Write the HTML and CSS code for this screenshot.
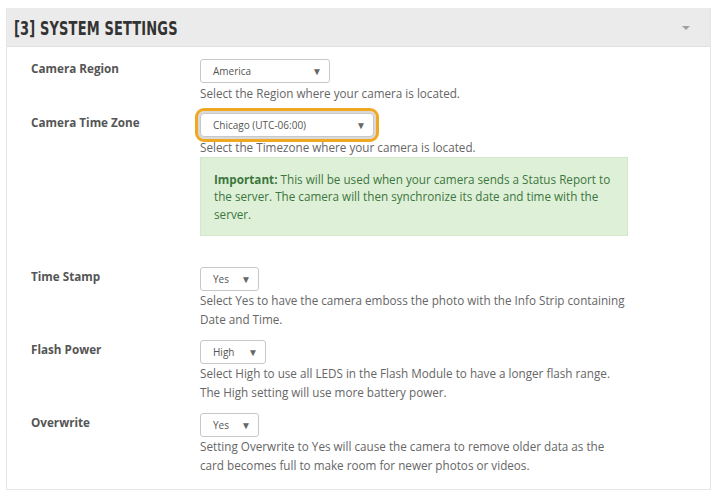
FILE: index.html
```html
<!DOCTYPE html>
<html>
<head>
<meta charset="utf-8">
<link rel="stylesheet" href="styles.css">
</head>
<body>
<div class="panel">
  <div class="panel-head">
    <h2 class="title">[3] System Settings</h2>
    <span class="caret"></span>
  </div>
  <div class="panel-body">
    <div class="row">
      <div class="label">Camera Region</div>
      <div class="field">
        <div class="select w-region"><span>America</span><span class="arrow">&#9660;</span></div>
        <div class="help">Select the Region where your camera is located.</div>
      </div>
    </div>
    <div class="row">
      <div class="label">Camera Time Zone</div>
      <div class="field">
        <div class="select w-zone highlight"><span>Chicago (UTC-06:00)</span><span class="arrow">&#9660;</span></div>
        <div class="help">Select the Timezone where your camera is located.</div>
        <div class="alert"><b>Important:</b> This will be used when your camera sends a Status Report to the server. The camera will then synchronize its date and time with the server.</div>
      </div>
    </div>
    <div class="row">
      <div class="label">Time Stamp</div>
      <div class="field">
        <div class="select w-yes"><span>Yes</span><span class="arrow">&#9660;</span></div>
        <div class="help">Select Yes to have the camera emboss the photo with the Info Strip containing<br>Date and Time.</div>
      </div>
    </div>
    <div class="row">
      <div class="label">Flash Power</div>
      <div class="field">
        <div class="select w-high"><span>High</span><span class="arrow">&#9660;</span></div>
        <div class="help">Select High to use all LEDS in the Flash Module to have a longer flash range.<br>The High setting will use more battery power.</div>
      </div>
    </div>
    <div class="row">
      <div class="label">Overwrite</div>
      <div class="field">
        <div class="select w-yes"><span>Yes</span><span class="arrow">&#9660;</span></div>
        <div class="help">Setting Overwrite to Yes will cause the camera to remove older data as the<br>card becomes full to make room for newer photos or videos.</div>
      </div>
    </div>
  </div>
</div>
</body>
</html>
```

FILE: styles.css
```css
html, body { margin: 0; padding: 0; background: #fff; }
body { padding: 8px 7px 0 6px; font-family: "Open Sans", "Liberation Sans", sans-serif; color: #666; }

.panel {
  width: 705px;
  border: 1px solid #e6e6e6;
  border-top: none;
  height: 482px;
  box-sizing: border-box;
}
.panel-head {
  background: #ebebeb;
  height: 39px;
  border-bottom: 1px solid #e0e0e0;
  display: flex;
  align-items: center;
  justify-content: space-between;
  padding: 0 20px 0 7px;
  box-sizing: border-box;
}
.title {
  margin: 2px 0 0 0;
  font-family: "DejaVu Sans Condensed", "DejaVu Sans", sans-serif;
  font-weight: bold;
  font-size: 19px;
  text-transform: uppercase;
  color: #333;
  letter-spacing: 0.2px;
  transform: scaleX(0.76);
  transform-origin: left center;
  white-space: nowrap;
}
.caret {
  width: 0; height: 0;
  border-left: 4px solid transparent;
  border-right: 4px solid transparent;
  border-top: 4px solid #a0a0a0;
  margin-top: 2px;
}
.panel-body {
  padding: 12px 0 0 24px;
}
.row {
  display: flex;
  margin-bottom: 10.5px;
}
.label {
  width: 169px;
  font-size: 11.7px;
  font-weight: bold;
  color: #555;
  padding-top: 1px;
}
.field { flex: 0 0 auto; }
.select {
  box-sizing: border-box;
  height: 24px;
  border: 1px solid #c8c8c8;
  border-radius: 3px;
  display: flex;
  align-items: center;
  justify-content: space-between;
  padding: 0 7px 0 12px;
  font-size: 10px;
  color: #555;
  background: #fff;
}
.arrow { font-size: 10px; color: #666; }
.w-region { width: 130px; }
.w-zone { width: 174px; }
.w-yes { width: 59px; }
.w-high { width: 66px; }
.highlight {
  outline: 3px solid #efa822;
  outline-offset: 2px;
  box-shadow: 0 0 0 2px #d9d9d9;
  border-radius: 4px;
  position: relative;
  z-index: 1;
}
.help {
  font-size: 11.7px;
  line-height: 19px;
  color: #666;
  margin-top: 0.5px;
}
.alert {
  width: 428px;
  box-sizing: border-box;
  background: #dff0d8;
  border: 1px solid #d3e8c8;
  color: #3c763d;
  font-size: 11.7px;
  line-height: 17.5px;
  padding: 13px 13px 12px 13px;
  margin-bottom: 20px;
}
.alert b { font-weight: bold; }
```
